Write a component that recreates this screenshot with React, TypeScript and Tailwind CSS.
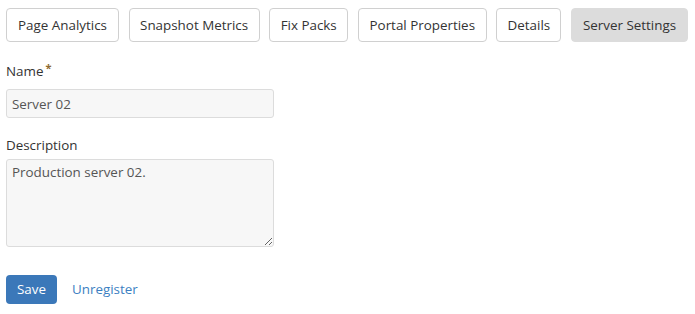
import React from "react"

const tabs = [
  { label: "Page Analytics", width: "w-[113px]" },
  { label: "Snapshot Metrics", width: "w-[131px]" },
  { label: "Fix Packs", width: "w-[79px]" },
  { label: "Portal Properties", width: "w-[129px]" },
  { label: "Details", width: "w-[65px]" },
  { label: "Server Settings", width: "w-[117px]" },
]

const App = () => {
  return (
    <main
      className="w-[695px] h-[314px] bg-white px-[6px] pt-[8px] text-[#333]"
      style={{ fontFamily: '"Open Sans", sans-serif' }}
    >
      <div className="flex gap-[9.6px]">
        {tabs.map((tab) => (
          <button
            key={tab.label}
            className={
              tab.label === "Server Settings"
                ? `${tab.width} shrink-0 whitespace-nowrap h-[34px] rounded-[4px] border border-[#dcdcdc] bg-[#dcdcdc] text-[13.4px] text-[#333]`
                : `${tab.width} shrink-0 whitespace-nowrap h-[34px] rounded-[4px] border border-[#d0d0d0] bg-white text-[13.4px] text-[#333]`
            }
          >
            {tab.label}
          </button>
        ))}
      </div>

      <form className="mt-[19px] w-[268px]">
        <label className="flex items-start text-[13.4px] leading-[20px] text-[#333]">
          Name
          <span className="ml-[2px] mt-[1px] text-[11px] font-bold leading-[11px] text-[#8d6a2f]">*</span>
        </label>
        <input
          defaultValue="Server 02"
          className="mt-[8px] block w-full h-[29px] px-[5px] rounded-[3px] border border-[#dcdcdc] bg-[#f7f7f7] text-[13.4px] text-[#555] outline-none"
        />

        <label className="mt-[17px] block text-[13.4px] leading-[20px] text-[#333]">
          Description
        </label>
        <textarea
          defaultValue="Production server 02."
          className="mt-[4px] block w-full h-[88px] px-[5px] py-[2px] rounded-[3px] border border-[#dcdcdc] bg-[#f7f7f7] text-[13.4px] text-[#555] outline-none"
        />

        <div className="mt-[28px] flex items-center gap-[15px]">
          <button
            type="button"
            className="h-[29px] w-[51px] rounded-[4px] bg-[#3b78b9] text-[13.4px] text-white"
          >
            Save
          </button>
          <a className="text-[13.4px] text-[#3c7fc2]" href="#">
            Unregister
          </a>
        </div>
      </form>
    </main>
  )
}

export default App
